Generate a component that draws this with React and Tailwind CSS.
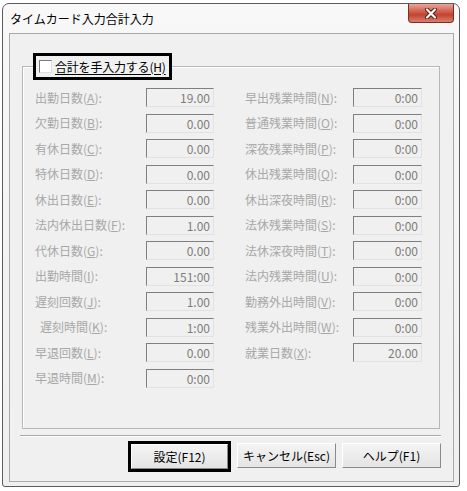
import React from 'react';

const leftRows = [
  ['出勤日数', 'A', '19.00'],
  ['欠勤日数', 'B', '0.00'],
  ['有休日数', 'C', '0.00'],
  ['特休日数', 'D', '0.00'],
  ['休出日数', 'E', '0.00'],
  ['法内休出日数', 'F', '1.00'],
  ['代休日数', 'G', '0.00'],
  ['出勤時間', 'I', '151:00'],
  ['遅刻回数', 'J', '1.00'],
  ['遅刻時間', 'K', '1:00', true],
  ['早退回数', 'L', '0.00'],
  ['早退時間', 'M', '0:00'],
];

const rightRows = [
  ['早出残業時間', 'N', '0:00'],
  ['普通残業時間', 'O', '0:00'],
  ['深夜残業時間', 'P', '0:00'],
  ['休出残業時間', 'Q', '0:00'],
  ['休出深夜時間', 'R', '0:00'],
  ['法休残業時間', 'S', '0:00'],
  ['法休深夜時間', 'T', '0:00'],
  ['法内残業時間', 'U', '0:00'],
  ['勤務外出時間', 'V', '0:00'],
  ['残業外出時間', 'W', '0:00'],
  ['就業日数', 'X', '20.00'],
];

function Field({ label, hotkey, value, indent, labelWidth, boxWidth }) {
  return (
    <div className="flex items-center h-[25.5px]">
      <div className={`${labelWidth} text-[12px] leading-none text-[#a8a8a8] whitespace-nowrap ${indent ? 'pl-[5px]' : ''}`}>
        {label}(<u>{hotkey}</u>):
      </div>
      <div className={`${boxWidth} h-[19px] border border-t-[#7f7f7f] border-l-[#7f7f7f] border-r-[#e2e2e2] border-b-[#e2e2e2] bg-[#f0f0f0] text-right pr-[3px] text-[12px] leading-[17px] text-[#7d7d7d]`}>
        {value}
      </div>
    </div>
  );
}

function Button({ children, focused }) {
  const btn = 'h-[25px] border border-t-white border-l-white border-r-[#8a8a8a] border-b-[#8a8a8a] bg-[linear-gradient(to_bottom,#f4f4f4,#e4e4e4)] text-[12px] leading-none text-black flex items-center justify-center';
  if (focused) {
    return (
      <div className="border-[3px] border-black">
        <div className={`${btn} w-[97px]`}>{children}</div>
      </div>
    );
  }
  return <div className={`${btn} w-[99px] mt-[2px]`}>{children}</div>;
}

export default function App() {
  return (
    <div className="w-[467px] h-[491px] bg-white pt-[3px] pl-[2px] font-['Noto_Sans_CJK_JP',sans-serif]">
      <div className="w-[458px] h-[484px] border border-[#5c5c5c] rounded-t-[7px] rounded-b-[3px] bg-[linear-gradient(to_bottom,#f8f8f8,#efefef)] flex flex-col overflow-hidden">
        {/* title bar */}
        <div className="h-[29px] flex items-start justify-between shrink-0">
          <div className="pl-[7px] h-full flex items-center text-[12px] leading-none text-black">タイムカード入力合計入力</div>
          <div className="mr-[5px] w-[46px] h-[19px] border border-t-0 border-[#7e2c20] rounded-b-[4px] bg-[linear-gradient(to_bottom,#e8a699,#cf5a48_45%,#c24333_60%,#d9806d)] flex items-center justify-center">
            <svg width="14" height="11" viewBox="0 0 14 11">
              <path d="M3 1.5 L11 9.5 M11 1.5 L3 9.5" stroke="#5a1a12" strokeWidth="4" strokeLinecap="round" />
              <path d="M3 1.5 L11 9.5 M11 1.5 L3 9.5" stroke="#ffffff" strokeWidth="2.2" strokeLinecap="round" />
            </svg>
          </div>
        </div>

        {/* client area */}
        <div className="ml-[6px] mr-[5px] mb-[4px] flex-1 border border-[#a9a9a9] bg-[#f0f0f0] flex flex-col">
          <fieldset className="ml-[12px] mt-[19px] w-[418px] border border-[#b7b7b7] shadow-[inset_1px_1px_0_#ffffff] px-0 pt-[5px] pb-[37px]">
            <legend className="ml-[10px] h-[27px] w-[139px] border-[3px] border-black pl-[3px] flex items-center gap-[3px] overflow-hidden">
              <span className="shrink-0 w-[13px] h-[13px] border border-t-[#7a7a7a] border-l-[#7a7a7a] border-r-[#dedede] border-b-[#dedede] bg-white" />
              <span className="text-[12px] leading-none text-black underline underline-offset-2 whitespace-nowrap tracking-[-0.2px]">合計を手入力する(H)</span>
            </legend>
            <div className="pl-[12px] flex">
              <div className="flex flex-col">
                {leftRows.map(([l, k, v, ind]) => (
                  <Field key={k} label={l} hotkey={k} value={v} indent={ind} labelWidth="w-[111px]" boxWidth="w-[68px]" />
                ))}
              </div>
              <div className="flex flex-col ml-[31px]">
                {rightRows.map(([l, k, v]) => (
                  <Field key={k} label={l} hotkey={k} value={v} labelWidth="w-[108px]" boxWidth="w-[69px]" />
                ))}
              </div>
            </div>
          </fieldset>

          <div className="ml-[10px] mt-[6px] w-[421px] border-t border-t-[#a8a8a8] border-b border-b-white" />

          <div className="mt-[4px] pr-[12px] flex justify-end items-start gap-[6px]">
            <Button focused>設定(F12)</Button>
            <Button>キャンセル(Esc)</Button>
            <Button>ヘルプ(F1)</Button>
          </div>
        </div>
      </div>
    </div>
  );
}
